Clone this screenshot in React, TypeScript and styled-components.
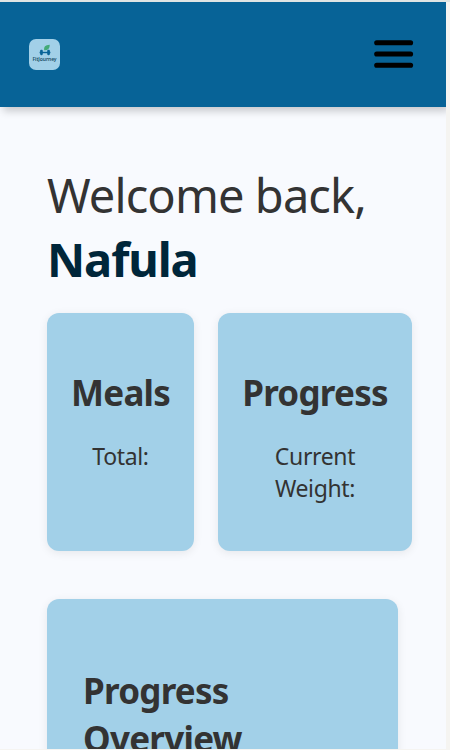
import React from 'react';
import styled, { createGlobalStyle } from 'styled-components';

const GlobalStyle = createGlobalStyle`
  * { box-sizing: border-box; }
  body {
    margin: 0;
    overflow: hidden;
    background: #f5f4f1;
    color: #333;
    font-family: 'Noto Sans', 'Open Sans', sans-serif;
  }
`;

const Frame = styled.div`
  height: 750px;
  padding: 2px 4px 1px 0;
  background: linear-gradient(#dfe5e4 0 2px, #f5f4f1 2px);
`;

const Page = styled.div`
  height: 747px;
  overflow: hidden;
  background: #f8fafe;
`;

const Header = styled.header`
  display: flex;
  align-items: center;
  justify-content: space-between;
  height: 105px;
  padding: 0 32px 0 29px;
  background: #076397;
  box-shadow: 3px 4px 8px rgba(0, 0, 0, 0.2);
`;

const Logo = styled.div`
  display: flex;
  flex-direction: column;
  align-items: center;
  width: 31px;
  height: 31px;
  padding-top: 5px;
  border-radius: 7px;
  background: #a2d0e8;
`;

const LogoName = styled.span`
  color: #174d65;
  font-size: 5px;
  font-weight: 600;
  line-height: 7px;
  letter-spacing: -0.08px;
  white-space: nowrap;
`;

const MenuButton = styled.button`
  display: flex;
  padding: 0 0 1px;
  border: 0;
  background: none;
`;

const Main = styled.main`
  padding: 56px 34px 0 47px;
`;

const Greeting = styled.h1`
  display: flex;
  flex-direction: column;
  margin: 0;
  font-size: 47px;
  font-weight: 400;
  line-height: 64px;
  letter-spacing: -0.9px;
  white-space: nowrap;
`;

const UserName = styled.strong`
  color: #00263a;
  font-weight: 700;
  letter-spacing: -1.1px;
`;

const Stats = styled.section`
  display: grid;
  grid-template-columns: 147px 194px;
  gap: 24px;
  margin-top: 22px;
`;

const Card = styled.article`
  border-radius: 12px;
  background: #a2d0e8;
  box-shadow: 0 2px 10px rgba(0, 0, 0, 0.08);
`;

const StatCard = styled(Card)`
  height: 238px;
  padding: 56px 24px 0;
  text-align: center;
`;

const CardTitle = styled.h2`
  margin: 0;
  font-size: 35px;
  font-weight: 700;
  line-height: 48px;
  letter-spacing: -0.75px;
`;

const StatLabel = styled.p`
  margin: 23px 0 0;
  font-size: 23px;
  line-height: 32px;
  letter-spacing: -0.35px;
`;

const Overview = styled(Card)`
  width: 351px;
  height: 300px;
  margin-top: 48px;
  padding: 68px 36px 0;
`;

const LogoMark = () => (
  <svg width="12" height="12" viewBox="0 0 12 12" aria-hidden="true">
    <path d="M5.2 6.2C4.6 2.8 6.3 1.1 10.7 .7C10.8 4.4 9.1 6.2 5.2 6.2Z" fill="#43aa78" />
    <path d="M.6 8.5h10.8" stroke="#086397" strokeWidth="1.4" />
    <rect x="1.1" y="5.8" width="2.7" height="5.4" rx="1.1" fill="#086397" />
    <rect x="8.2" y="5.8" width="2.7" height="5.4" rx="1.1" fill="#086397" />
  </svg>
);

const MenuIcon = () => (
  <svg width="40" height="30" viewBox="0 0 40 30" aria-hidden="true">
    <path d="M2.7 3.8h33.9M2.7 15h33.9M2.7 26.3h33.9" stroke="#000" strokeWidth="5.1" strokeLinecap="round" />
  </svg>
);

export default function App() {
  return (
    <>
      <GlobalStyle />
      <Frame>
        <Page>
          <Header>
            <Logo>
              <LogoMark />
              <LogoName>FitJourney</LogoName>
            </Logo>
            <MenuButton aria-label="Open menu">
              <MenuIcon />
            </MenuButton>
          </Header>
          <Main>
            <Greeting>
              <span>Welcome back,</span>
              <UserName>Nafula</UserName>
            </Greeting>
            <Stats>
              <StatCard>
                <CardTitle>Meals</CardTitle>
                <StatLabel>Total:</StatLabel>
              </StatCard>
              <StatCard>
                <CardTitle>Progress</CardTitle>
                <StatLabel>Current Weight:</StatLabel>
              </StatCard>
            </Stats>
            <Overview>
              <CardTitle>Progress Overview</CardTitle>
            </Overview>
          </Main>
        </Page>
      </Frame>
    </>
  );
}
